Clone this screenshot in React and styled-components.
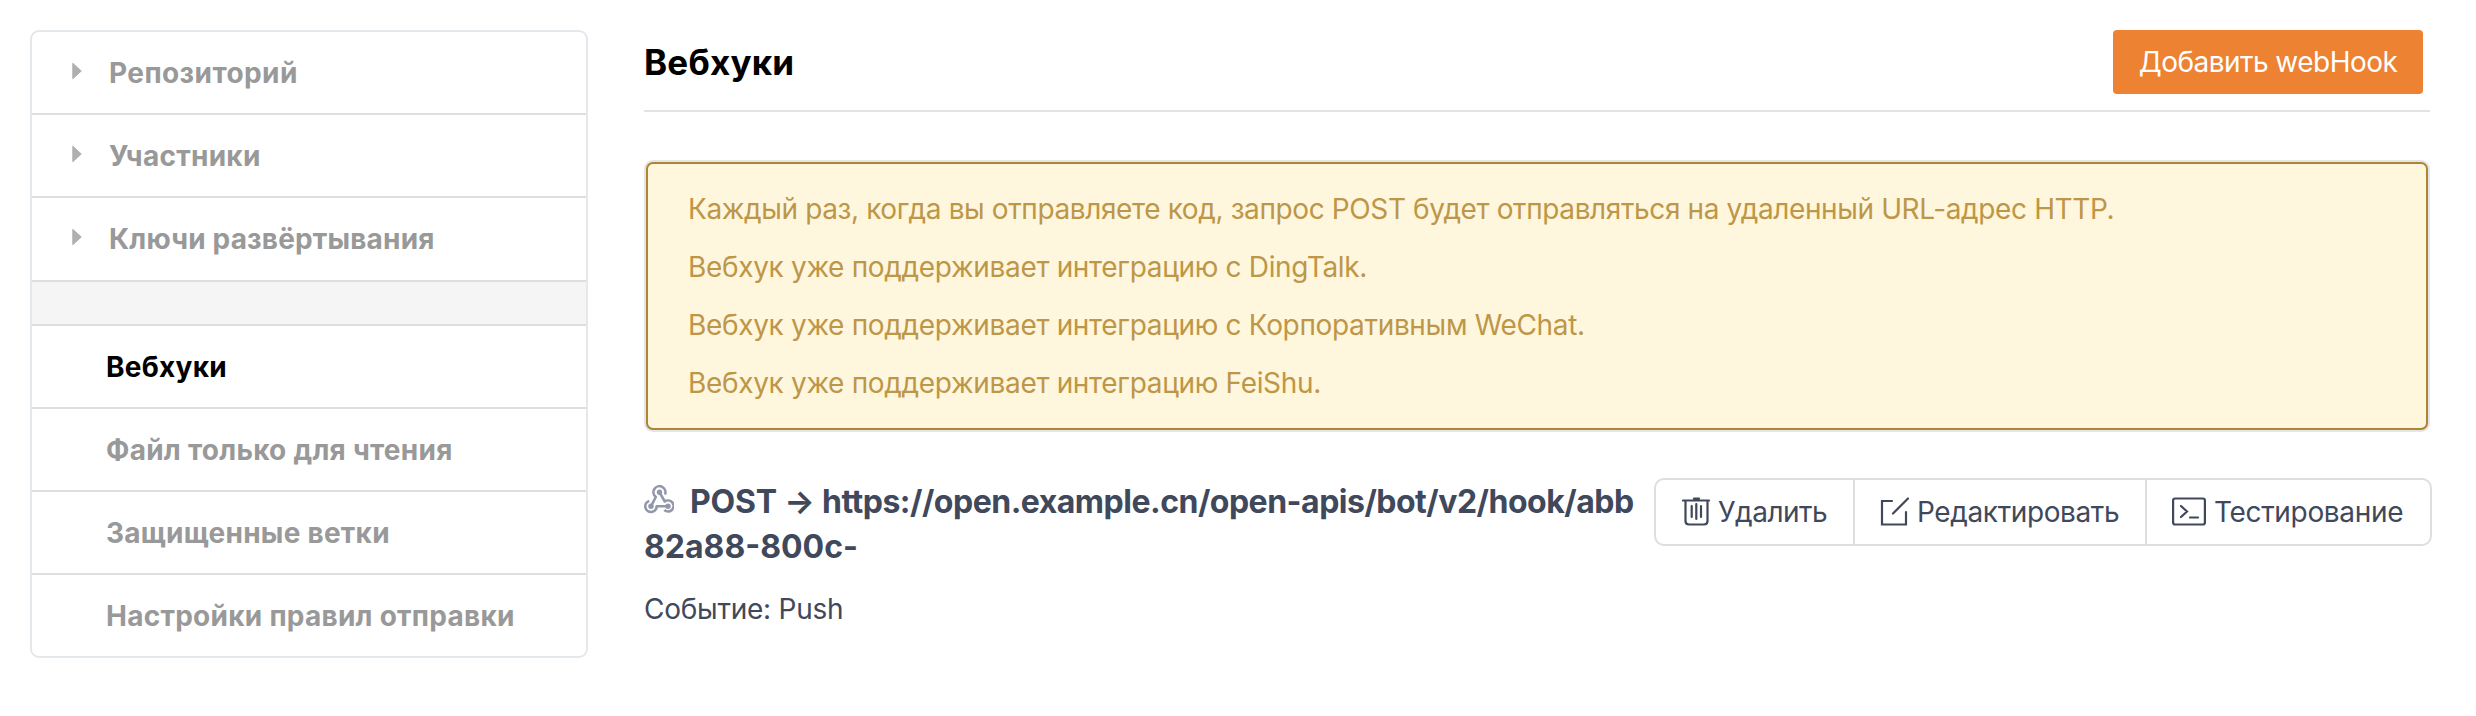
import React from 'react';
import styled, { createGlobalStyle } from 'styled-components';

const GlobalStyle = createGlobalStyle`
  * { box-sizing: border-box; }
  body {
    margin: 0;
    background: #fff;
    color: #40485b;
    font-family: Inter, "Noto Sans", sans-serif;
    font-size: 28px;
    line-height: 40px;
  }
`;

const Page = styled.div`
  display: flex;
  align-items: flex-start;
  gap: 56px;
  width: 2476px;
  height: 716px;
  padding: 30px 44px 0 30px;
`;

const Sidebar = styled.nav`
  flex: none;
  width: 558px;
  border: 2px solid #e3e8ed;
  border-radius: 9px;
  overflow: hidden;
`;

const MenuItem = styled.a`
  display: flex;
  align-items: center;
  height: ${(p) => p.$height || 83}px;
  padding: 0 0 0 ${(p) => (p.$group ? 40 : 74)}px;
  border-bottom: 2px solid #dededf;
  color: ${(p) => (p.$active ? '#000' : '#999')};
  font-weight: 700;
  letter-spacing: ${(p) => p.$spacing || 0.26}px;
  white-space: nowrap;
  &:last-child { height: 81px; border-bottom: 0; }
`;

const Caret = styled.svg`
  width: 10px;
  height: 18px;
  margin: 0 27px 4px 0;
  fill: #b0b0b0;
`;

const Spacer = styled.div`
  height: 44px;
  background: #f5f5f5;
  border-bottom: 2px solid #dededf;
`;

const Main = styled.main`
  flex: none;
  width: 1786px;
`;

const Header = styled.header`
  display: flex;
  align-items: center;
  justify-content: space-between;
  height: 82px;
  padding: 0 7px 16px 0;
  border-bottom: 2px solid #e3e3e4;
`;

const Title = styled.h1`
  margin: 0;
  color: #000;
  font-size: 35px;
  font-weight: 700;
  letter-spacing: 0.2px;
`;

const AddButton = styled.button`
  width: 310px;
  height: 64px;
  padding: 0;
  border: 0;
  border-radius: 4px;
  background: #ed8233;
  color: #fff;
  font: inherit;
  letter-spacing: -0.53px;
  white-space: nowrap;
`;

const Notice = styled.section`
  margin: 50px 2px 0;
  height: 268px;
  padding: 25px 40px 0;
  border: 2px solid #b18431;
  border-radius: 7px;
  box-shadow: 0 0 0 2px #e2e5ea;
  background: #fff6de;
  color: #bd9747;
`;

const NoticeLine = styled.p`
  margin: 0 0 18px;
  letter-spacing: ${(p) => p.$spacing || -0.33}px;
  white-space: nowrap;
`;

const Hook = styled.section`
  display: flex;
  justify-content: space-between;
  align-items: flex-start;
  width: 1788px;
  margin-top: 48px;
`;

const HookInfo = styled.div`
  width: 1000px;
`;

const HookTitle = styled.h2`
  margin: 1px 0 0;
  font-size: 32px;
  line-height: 45px;
  font-weight: 700;
  white-space: nowrap;
`;

const HookMethod = styled.span`
  letter-spacing: -0.2px;
`;

const HookUrl = styled.span`
  letter-spacing: -0.5px;
`;

const HookIcon = styled.svg`
  width: 30px;
  height: 30px;
  margin-right: 16px;
  vertical-align: -2px;
  fill: none;
  stroke: #9298aa;
  stroke-width: 2.600;
  stroke-linejoin: round;
`;

const HookEvent = styled.p`
  margin: 20px 0 0;
  letter-spacing: -0.24px;
`;

const Actions = styled.div`
  display: flex;
  flex: none;
  width: 778px;
  height: 68px;
  border: 2px solid #dededf;
  border-radius: 10px;
`;

const Action = styled.button`
  display: flex;
  align-items: center;
  flex: 0 0 ${(p) => p.$width}px;
  gap: 8px;
  padding: 0 0 0 ${(p) => p.$pad}px;
  border: 0;
  border-left: ${(p) => (p.$first ? 0 : 2)}px solid #dededf;
  background: transparent;
  color: inherit;
  font: inherit;
  letter-spacing: ${(p) => p.$spacing || -0.38}px;
  white-space: nowrap;
`;

const ActionIcon = styled.svg`
  flex: none;
  height: 30px;
  fill: none;
  stroke: #40485b;
  stroke-width: 2.200;
  stroke-linecap: round;
`;

const CaretIcon = () => (
  <Caret viewBox="0 0 10 18"><path d="M.8 1.300l8.500 7.700-8.500 7.700z" stroke="#b0b0b0" strokeLinejoin="round" /></Caret>
);

export default function App() {
  return (
    <>
      <GlobalStyle />
      <Page>
        <Sidebar>
          <MenuItem $group $spacing={0.42}><CaretIcon />Репозиторий</MenuItem>
          <MenuItem $group><CaretIcon />Участники</MenuItem>
          <MenuItem $group $height={84} $spacing={0.18}><CaretIcon />Ключи развёртывания</MenuItem>
          <Spacer />
          <MenuItem $active>Вебхуки</MenuItem>
          <MenuItem>Файл только для чтения</MenuItem>
          <MenuItem>Защищенные ветки</MenuItem>
          <MenuItem>Настройки правил отправки</MenuItem>
        </Sidebar>
        <Main>
          <Header>
            <Title>Вебхуки</Title>
            <AddButton>Добавить webHook</AddButton>
          </Header>
          <Notice>
            <NoticeLine $spacing={-0.38}>Каждый раз, когда вы отправляете код, запрос POST будет отправляться на удаленный URL-адрес HTTP.</NoticeLine>
            <NoticeLine>Вебхук уже поддерживает интеграцию с DingTalk.</NoticeLine>
            <NoticeLine>Вебхук уже поддерживает интеграцию с Корпоративным WeChat.</NoticeLine>
            <NoticeLine>Вебхук уже поддерживает интеграцию FeiShu.</NoticeLine>
          </Notice>
          <Hook>
            <HookInfo>
              <HookTitle>
                <HookIcon viewBox="0 0 30 30">
                  <path d="M21 9.500A6 6 0 1 0 11.800 12L7 21.300M20.300 25A5.500 5.500 0 1 0 20.800 16.500L15.500 7.300M5.200 15.900A5.700 5.700 0 1 0 12.700 21.300H24" />
                  <g fill="#9298aa" stroke="none">
                    <circle cx="15.5" cy="7.3" r="2.7" />
                    <circle cx="7" cy="21.3" r="2.7" />
                    <circle cx="24" cy="21.3" r="2.7" />
                  </g>
                </HookIcon>
                <HookMethod>POST → </HookMethod><HookUrl>https://open.example.cn/open-apis/bot/v2/hook/abb</HookUrl><br />82a88-800c-
              </HookTitle>
              <HookEvent>Событие: Push</HookEvent>
            </HookInfo>
            <Actions>
              <Action $first $width={197} $pad={26} $spacing={-0.5}>
                <ActionIcon width="28" viewBox="0 0 28 30"><path d="M1 3.500h26M12 1.500h5M3.500 4v20q0 3.500 3.500 3.500h15q3.500 0 3.500-3.500V4M9.700 9v11M14.300 7v15M19 9v11" /></ActionIcon>
                Удалить
              </Action>
              <Action $width={292} $pad={25}>
                <ActionIcon width="29" viewBox="0 0 29 30"><path d="M12 4H2v23.500h24V15M13 16.500L28 1.500" /></ActionIcon>
                Редактировать
              </Action>
              <Action $width={287} $pad={25} $spacing={-0.33}>
                <ActionIcon width="34" viewBox="0 0 34 30"><rect x="1.1" y="1.5" width="31.8" height="26" rx="2" /><path d="M9 9l6 5.500-6 5.500M18 20.500h8" /></ActionIcon>
                Тестирование
              </Action>
            </Actions>
          </Hook>
        </Main>
      </Page>
    </>
  );
}
